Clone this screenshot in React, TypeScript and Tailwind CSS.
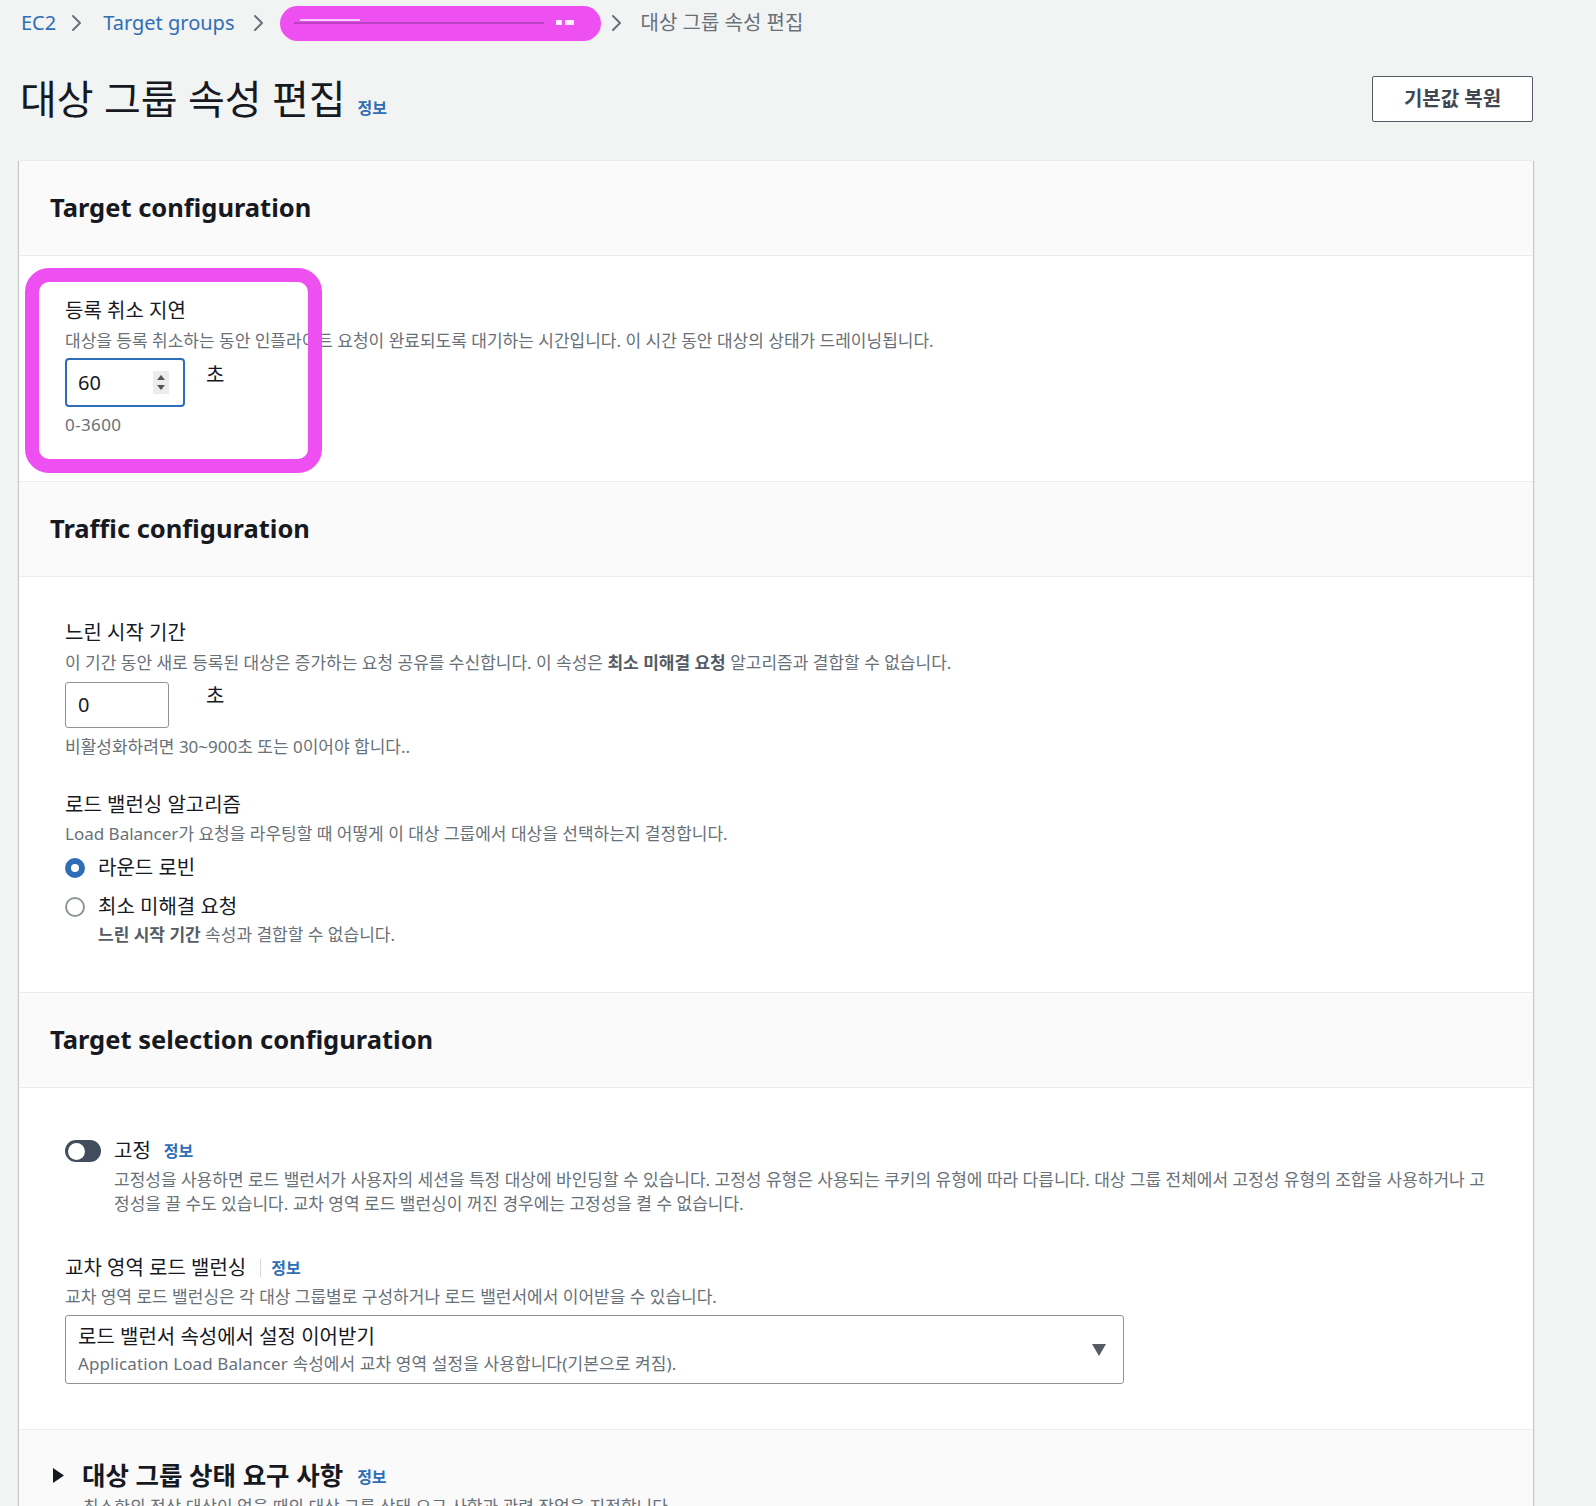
import React from "react";

function Chevron() {
  return (
    <svg width="11" height="18" viewBox="0 0 11 18" className="shrink-0">
      <polyline points="2,2 9,9 2,16" fill="none" stroke="#687078" strokeWidth="2" strokeLinecap="round" strokeLinejoin="round" />
    </svg>
  );
}

function SectionHeader({ title }: { title: string }) {
  return (
    <div className="h-[95px] flex items-center pl-[31px] pb-[3px] bg-[#fafafa] border-b border-[#eaeded]">
      <h2 className="text-[25.5px] font-bold text-[#16191f] leading-[30px]">{title}</h2>
    </div>
  );
}

function Info({ className = "" }: { className?: string }) {
  return <span className={"text-[16px] font-bold text-[#2f6eb6] " + className}>정보</span>;
}

export default function App() {
  return (
    <div className="h-[1506px] overflow-hidden bg-[#f2f3f3] pl-[19px] pr-[63px] font-['Noto_Sans','Noto_Sans_CJK_KR',sans-serif] text-[#16191f]">
      {/* Breadcrumb */}
      <nav className="h-[46px] flex items-center pl-[2px] text-[20px] leading-[26px]">
        <span className="text-[#2f6eb6]">EC2</span>
        <span className="ml-[15px] mr-[21px] flex"><Chevron /></span>
        <span className="text-[#2f6eb6]">Target groups</span>
        <span className="ml-[18px] mr-[16px] flex"><Chevron /></span>
        <span className="relative h-[35px] w-[321px] shrink-0 rounded-full bg-[#ee4ff0] flex items-center">
          <span className="absolute left-[14px] top-[16px] h-[2px] w-[250px] bg-[#9a3aa6] opacity-60" />
          <span className="absolute left-[20px] top-[13px] h-[2px] w-[60px] bg-white opacity-70" />
          <span className="absolute left-[276px] top-[14px] h-[5px] w-[6px] bg-white opacity-90" />
          <span className="absolute left-[285px] top-[14px] h-[5px] w-[9px] bg-white opacity-90" />
        </span>
        <span className="ml-[10px] mr-[19px] flex"><Chevron /></span>
        <span className="text-[#687078]">대상 그룹 속성 편집</span>
      </nav>

      {/* Title row */}
      <div className="mt-[30px] h-[46px] flex items-center justify-between">
        <div className="flex items-baseline pl-[1px]">
          <h1 className="text-[40px] leading-[46px] font-normal text-[#16191f]">대상 그룹 속성 편집</h1>
          <Info className="ml-[12px]" />
        </div>
        <button className="h-[46px] w-[161px] rounded-[2px] border border-[#545b64] bg-white text-[20px] font-bold text-[#414750]">
          기본값 복원
        </button>
      </div>

      {/* Container */}
      <div className="relative mt-[38px] bg-white border-t border-[#eaeded] shadow-[0_1px_1px_0_rgba(0,28,36,0.3),1px_1px_1px_0_rgba(0,28,36,0.15),-1px_1px_1px_0_rgba(0,28,36,0.15)]">
        {/* Section 1 */}
        <section className="border-b border-[#eaeded]">
          <SectionHeader title="Target configuration" />
          <div className="pl-[46px] pr-[46px] pt-[43px] pb-[45px]">
            <div className="text-[20px] leading-[24px]">등록 취소 지연</div>
            <div className="mt-[7px] text-[17px] leading-[22px] text-[#687078]">
              대상을 등록 취소하는 동안 인플라이트 요청이 완료되도록 대기하는 시간입니다. 이 시간 동안 대상의 상태가 드레이닝됩니다.
            </div>
            <div className="mt-[6px] flex items-start">
              <div className="w-[141px] shrink-0">
                <div className="h-[49px] w-[120px] rounded-[4px] border-2 border-[#2f6eb6] flex items-center justify-between pl-[11px] pr-[14px]">
                  <span className="text-[20px]">60</span>
                  <svg width="16" height="23" viewBox="0 0 16 23">
                    <rect x="0" y="0" width="16" height="23" fill="#ececec" />
                    <polygon points="4,9 12,9 8,4" fill="#555" />
                    <polygon points="4,14 12,14 8,19" fill="#555" />
                  </svg>
                </div>
              </div>
              <span className="mt-[5px] text-[20px] leading-[24px]">초</span>
            </div>
            <div className="mt-[7px] text-[17px] leading-[22px] text-[#687078] tracking-[0.4px]">0-3600</div>
          </div>
        </section>

        {/* Magenta highlight */}
        <div className="pointer-events-none absolute left-[6px] top-[107px] h-[205px] w-[297px] rounded-[24px] border-[14px] border-[#ee4ff0]" />

        {/* Section 2 */}
        <section className="border-b border-[#eaeded]">
          <SectionHeader title="Traffic configuration" />
          <div className="pl-[46px] pr-[46px] pt-[44px] pb-[46px]">
            <div className="text-[20px] leading-[24px]">느린 시작 기간</div>
            <div className="mt-[7px] text-[17px] leading-[22px] text-[#687078]">
              이 기간 동안 새로 등록된 대상은 증가하는 요청 공유를 수신합니다. 이 속성은 <b className="font-bold text-[#545b64]">최소 미해결 요청</b> 알고리즘과 결합할 수 없습니다.
            </div>
            <div className="mt-[8px] flex items-start">
              <div className="w-[141px] shrink-0">
                <div className="h-[46px] w-[104px] rounded-[3px] border border-[#8d9596] flex items-center pl-[12px]">
                  <span className="text-[20px]">0</span>
                </div>
              </div>
              <span className="mt-[2px] text-[20px] leading-[24px]">초</span>
            </div>
            <div className="mt-[8px] text-[17px] leading-[22px] text-[#687078]">비활성화하려면 30~900초 또는 0이어야 합니다..</div>

            <div className="mt-[35px] text-[20px] leading-[24px]">로드 밸런싱 알고리즘</div>
            <div className="mt-[6px] text-[17px] leading-[22px] text-[#687078]">
              Load Balancer가 요청을 라우팅할 때 어떻게 이 대상 그룹에서 대상을 선택하는지 결정합니다.
            </div>
            <div className="mt-[9px] h-[28px] flex items-center">
              <span className="h-[20px] w-[20px] rounded-full border-[6px] border-[#2f6eb6] bg-white" />
              <span className="ml-[13px] text-[20px] leading-[24px]">라운드 로빈</span>
            </div>
            <div className="mt-[11px] h-[28px] flex items-center">
              <span className="h-[20px] w-[20px] rounded-full border-2 border-[#8d9596] bg-white" />
              <span className="ml-[13px] text-[20px] leading-[24px]">최소 미해결 요청</span>
            </div>
            <div className="mt-[3px] pl-[33px] text-[17px] leading-[22px] text-[#687078]">
              <b className="font-bold text-[#545b64]">느린 시작 기간</b> 속성과 결합할 수 없습니다.
            </div>
          </div>
        </section>

        {/* Section 3 */}
        <section className="border-b border-[#eaeded]">
          <SectionHeader title="Target selection configuration" />
          <div className="pl-[46px] pr-[40px] pt-[51px] pb-[45px]">
            <div className="h-[24px] flex items-center">
              <span className="relative h-[22px] w-[36px] rounded-full bg-[#414d5c] shrink-0">
                <span className="absolute left-[2.5px] top-[2.5px] h-[17px] w-[17px] rounded-full bg-white" />
              </span>
              <span className="ml-[13px] text-[20px] leading-[24px]">고정</span>
              <Info className="ml-[13px]" />
            </div>
            <div className="mt-[5px] pl-[49px] text-[17px] leading-[24px] text-[#687078]">
              <span className="whitespace-nowrap">고정성을 사용하면 로드 밸런서가 사용자의 세션을 특정 대상에 바인딩할 수 있습니다. 고정성 유형은 사용되는 쿠키의 유형에 따라 다릅니다. 대상 그룹 전체에서 고정성 유형의 조합을 사용하거나 고</span>
              <br />
              <span className="whitespace-nowrap">정성을 끌 수도 있습니다. 교차 영역 로드 밸런싱이 꺼진 경우에는 고정성을 켤 수 없습니다.</span>
            </div>

            <div className="mt-[40px] h-[24px] flex items-center">
              <span className="text-[20px] leading-[24px]">교차 영역 로드 밸런싱</span>
              <span className="ml-[14px] h-[18px] w-px bg-[#d5dbdb]" />
              <Info className="ml-[10px]" />
            </div>
            <div className="mt-[6px] text-[17px] leading-[22px] text-[#687078]">
              교차 영역 로드 밸런싱은 각 대상 그룹별로 구성하거나 로드 밸런서에서 이어받을 수 있습니다.
            </div>
            <div className="mt-[7px] h-[69px] w-[1059px] rounded-[3px] border border-[#8d9596] flex items-center justify-between pl-[12px] pr-[17px]">
              <div className="flex flex-col">
                <span className="text-[20px] leading-[26px] text-[#16191f]">로드 밸런서 속성에서 설정 이어받기</span>
                <span className="mt-[3px] text-[17px] leading-[22px] text-[#687078] tracking-[0.1px]">Application Load Balancer 속성에서 교차 영역 설정을 사용합니다(기본으로 켜짐).</span>
              </div>
              <svg width="14" height="12" viewBox="0 0 14 12">
                <polygon points="0,0 14,0 7,12" fill="#545b64" />
              </svg>
            </div>
          </div>
        </section>

        {/* Section 4 */}
        <section className="bg-[#fafafa]">
          <div className="pl-[34px] pt-[30px] pb-[40px]">
            <div className="h-[30px] flex items-center">
              <svg width="11" height="15" viewBox="0 0 11 15" className="shrink-0">
                <polygon points="0,0 11,7.5 0,15" fill="#16191f" />
              </svg>
              <h2 className="ml-[18px] text-[25.5px] font-bold leading-[30px]">대상 그룹 상태 요구 사항</h2>
              <Info className="ml-[14px] mt-[4px]" />
            </div>
            <div className="mt-[6px] pl-[30px] text-[17px] leading-[22px] text-[#687078]">
              최소한의 정상 대상이 없을 때의 대상 그룹 상태 요구 사항과 관련 작업을 지정합니다.
            </div>
          </div>
        </section>
      </div>
    </div>
  );
}
